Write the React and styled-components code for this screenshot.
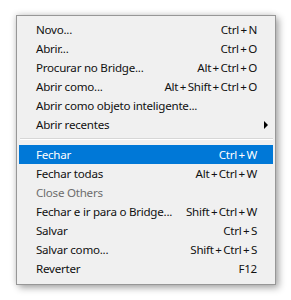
import React from 'react';
import styled, { createGlobalStyle } from 'styled-components';

const GlobalStyle = createGlobalStyle`
  html, body {
    margin: 0;
    background: #ffffff;
  }
  body {
    font-family: "Noto Sans", "Open Sans", sans-serif;
  }
`;

const items = [
  { label: 'Novo...', shortcut: 'Ctrl+N' },
  { label: 'Abrir...', shortcut: 'Ctrl+O' },
  { label: 'Procurar no Bridge...', shortcut: 'Alt+Ctrl+O' },
  { label: 'Abrir como...', shortcut: 'Alt+Shift+Ctrl+O' },
  { label: 'Abrir como objeto inteligente...' },
  { label: 'Abrir recentes', submenu: true },
  { separator: true },
  { label: 'Fechar', shortcut: 'Ctrl+W', active: true },
  { label: 'Fechar todas', shortcut: 'Alt+Ctrl+W' },
  { label: 'Close Others', disabled: true },
  { label: 'Fechar e ir para o Bridge...', shortcut: 'Shift+Ctrl+W' },
  { label: 'Salvar', shortcut: 'Ctrl+S' },
  { label: 'Salvar como...', shortcut: 'Shift+Ctrl+S' },
  { label: 'Reverter', shortcut: 'F12' },
];

function Keys({ text }) {
  if (!text) return null;
  const parts = text.split('+');
  return parts.map((k, i) => (
    <React.Fragment key={i}>
      {i > 0 && <Plus>+</Plus>}
      {k}
    </React.Fragment>
  ));
}

export default function App() {
  return (
    <Page>
      <GlobalStyle />
      <Menu>
        {items.map((item, i) =>
          item.separator ? (
            <Separator key={i} />
          ) : (
            <Item key={i} active={item.active} disabled={item.disabled}>
              <Label>{item.label}</Label>
              <Shortcut>
                <Keys text={item.shortcut} />
              </Shortcut>
              <ArrowCell>{item.submenu && <Arrow />}</ArrowCell>
            </Item>
          )
        )}
      </Menu>
    </Page>
  );
}

const Page = styled.div`
  width: 291px;
  height: 300px;
  padding: 15px 0 0 16px;
  box-sizing: border-box;
`;

const Menu = styled.div`
  width: 260px;
  box-sizing: border-box;
  background: #f0f0f0;
  border: 1px solid #979797;
  padding: 4px 2px 6px 2px;
  box-shadow: 3px 3px 7px rgba(0, 0, 0, 0.32), -1px -1px 6px rgba(0, 0, 0, 0.12);
`;

const Item = styled.div`
  display: grid;
  grid-template-columns: 1fr auto 16px;
  align-items: center;
  height: 19px;
  padding-left: 17px;
  font-size: 11.6px;
  letter-spacing: -0.25px;
  white-space: nowrap;
  background: ${(p) => (p.active ? '#0078d7' : 'transparent')};
  color: ${(p) => (p.active ? '#ffffff' : p.disabled ? '#6d6d6d' : '#111111')};
`;

const Label = styled.span``;

const Shortcut = styled.span`
  text-align: right;
`;

const Plus = styled.span`
  margin: 0 1.5px;
`;

const ArrowCell = styled.span`
  display: flex;
  justify-content: center;
  align-items: center;
`;

const Arrow = styled.span`
  width: 0;
  height: 0;
  border-top: 4px solid transparent;
  border-bottom: 4px solid transparent;
  border-left: 4px solid #000;
  margin-left: 1px;
`;

const Separator = styled.div`
  height: 1px;
  margin: 4px 0 5px 0;
  background: #d7d7d7;
  border-bottom: 1px solid #ffffff;
  margin-left: 1px;
`;
